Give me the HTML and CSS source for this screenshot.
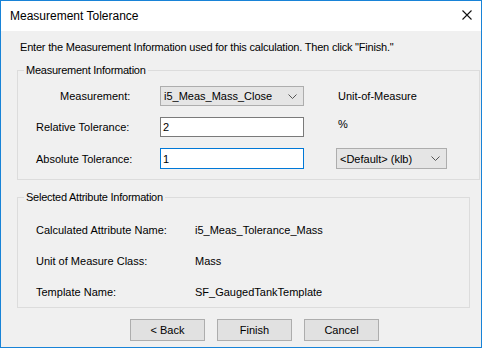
FILE: index.html
```html
<!DOCTYPE html>
<html lang="en">
<head>
    <meta charset="UTF-8">
    <title>Measurement Tolerance</title>
    <link rel="stylesheet" href="styles.css">
</head>
<body>

<div class="window">
    <!-- Title bar -->
    <div class="titlebar">
        <span class="title">Measurement Tolerance</span>
        <svg class="close" width="10" height="10" viewBox="0 0 10 10">
            <path d="M0.5 0.5 L9.5 9.5 M9.5 0.5 L0.5 9.5" stroke="#111" stroke-width="1.1"/>
        </svg>
    </div>

    <div class="content">
        <p class="intro">Enter the Measurement Information used for this calculation. Then click "Finish."</p>

        <!-- Measurement group -->
        <fieldset class="group group-meas">
            <legend>Measurement Information</legend>
            <div class="meas-grid">
                <label class="lbl lbl-meas">Measurement:</label>
                <div class="combo combo-meas">
                    <span>i5_Meas_Mass_Close</span>
                    <svg class="chev" width="9" height="5" viewBox="0 0 9 5"><path d="M0.5 0.5 L4.5 4.5 L8.5 0.5" fill="none" stroke="#555" stroke-width="1"/></svg>
                </div>
                <span class="unit">Unit-of-Measure</span>

                <label class="lbl">Relative Tolerance:</label>
                <div class="textbox">2</div>
                <span class="unit unit-pct">%</span>

                <label class="lbl">Absolute Tolerance:</label>
                <div class="textbox focused">1</div>
                <div class="combo combo-unit">
                    <span>&lt;Default&gt; (klb)</span>
                    <svg class="chev" width="9" height="5" viewBox="0 0 9 5"><path d="M0.5 0.5 L4.5 4.5 L8.5 0.5" fill="none" stroke="#555" stroke-width="1"/></svg>
                </div>
            </div>
        </fieldset>

        <!-- Attribute group -->
        <fieldset class="group group-attr">
            <legend>Selected Attribute Information</legend>
            <div class="attr-row">
                <span class="attr-name">Calculated Attribute Name:</span>
                <span>i5_Meas_Tolerance_Mass</span>
            </div>
            <div class="attr-row">
                <span class="attr-name">Unit of Measure Class:</span>
                <span>Mass</span>
            </div>
            <div class="attr-row">
                <span class="attr-name">Template Name:</span>
                <span>SF_GaugedTankTemplate</span>
            </div>
        </fieldset>

        <div class="buttons">
            <button>&lt; Back</button>
            <button>Finish</button>
            <button>Cancel</button>
        </div>
    </div>
</div>

</body>
</html>
```

FILE: styles.css
```css
body {
    margin: 0;
    background-color: white;
    font-family: "Liberation Sans", Arial, sans-serif;
    font-size: 11px;
    color: #000;
}
.window {
    width: 482px;
    height: 348px;
    box-sizing: border-box;
    border: 1px solid #1883d7;
    background-color: #f0f0f0;
    display: flex;
    flex-direction: column;
}
.titlebar {
    height: 30px;
    background-color: white;
    display: flex;
    align-items: center;
    justify-content: space-between;
    padding: 0 9px 0 9px;
    flex-shrink: 0;
}
.title {
    font-size: 12px;
    margin-top: -1px;
}
.close {
    margin-top: -2px;
}
.content {
    padding: 0 10px 0 16px;
}
.intro {
    margin: 9px 0 0 3px;
    height: 14px;
    line-height: 14px;
    letter-spacing: -0.2px;
}
.group {
    margin: 0;
    padding: 0;
    border: 1px solid #dcdcdc;
    width: 453px;
    box-sizing: border-box;
}
.group legend {
    padding: 0 2px;
    margin-left: 6px;
    line-height: 14px;
    letter-spacing: -0.25px;
}
.group-meas {
    margin-top: 9px;
    height: 117px;
}
.meas-grid {
    display: grid;
    grid-template-columns: 142px 144px 175px;
    grid-template-rows: 20px 20px 21px;
    row-gap: 11px;
    align-items: center;
    margin-top: 9px;
}
.lbl {
    padding-left: 18px;
}
.lbl-meas {
    padding-left: 42px;
}
.combo {
    height: 100%;
    box-sizing: border-box;
    border: 1px solid #adadad;
    background-color: #e5e5e5;
    display: flex;
    align-items: center;
    justify-content: space-between;
    padding: 0 6px 0 3px;
}
.combo-unit {
    width: 111px;
    margin-left: 32px;
}
.textbox {
    height: 100%;
    box-sizing: border-box;
    border: 1px solid #7a7a7a;
    background-color: white;
    padding-left: 2px;
    display: flex;
    align-items: center;
}
.textbox.focused {
    border-color: #0078d7;
}
.unit {
    padding-left: 34px;
}
.unit-pct {
    align-self: start;
    line-height: 14px;
}
.group-attr {
    margin-top: 10px;
    height: 118px;
    padding-top: 19px;
}
.attr-row {
    display: flex;
    height: 14px;
    line-height: 14px;
    margin-bottom: 17px;
}
.attr-name {
    width: 159px;
    padding-left: 18px;
}
.buttons {
    display: flex;
    gap: 12px;
    margin: 11px 0 0 113px;
}
button {
    width: 75px;
    height: 22px;
    font-family: "Liberation Sans", Arial, sans-serif;
    font-size: 11px;
    color: #000;
    background-color: #e1e1e1;
    border: 1px solid #adadad;
    border-radius: 0;
    padding: 0;
}
```
